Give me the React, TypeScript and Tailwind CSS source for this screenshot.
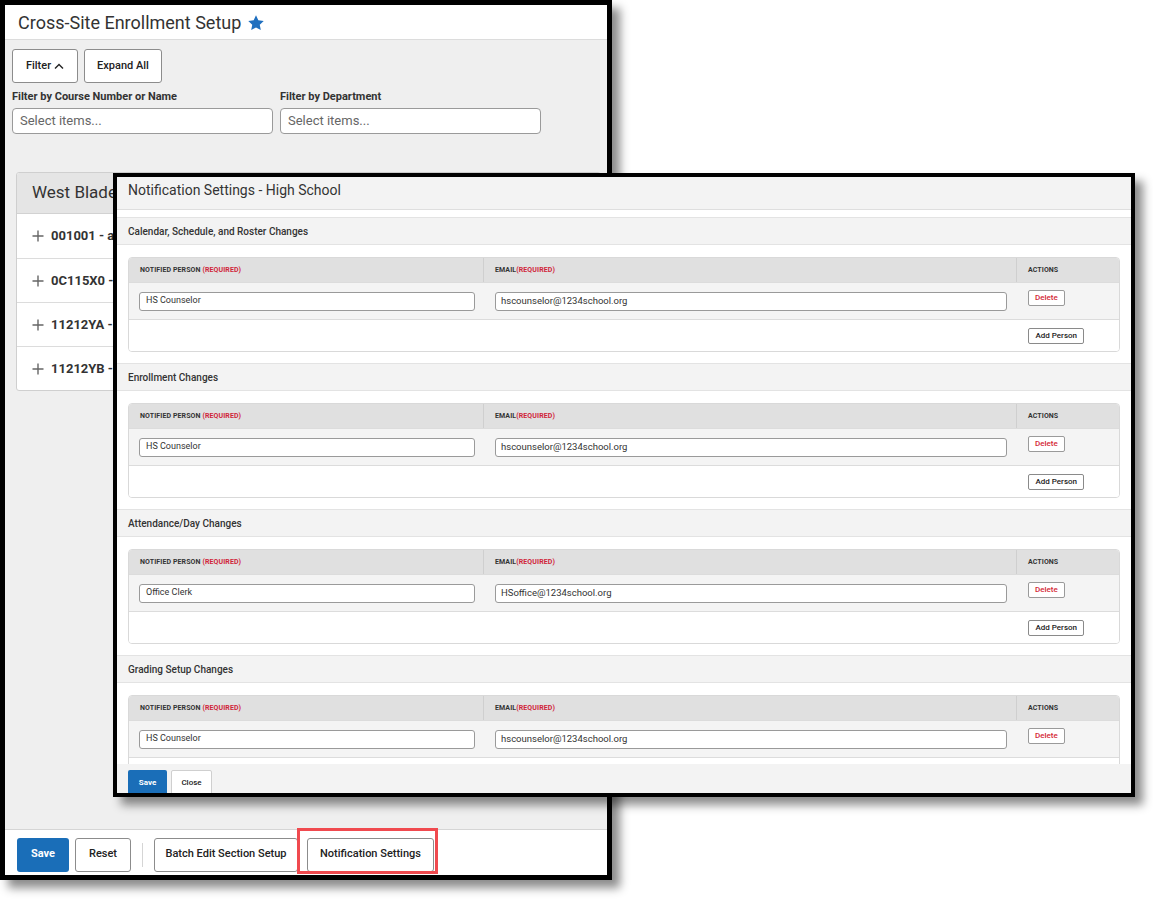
import React from 'react';

const font = { fontFamily: 'Roboto, "Liberation Sans", sans-serif' };

type Person = { name: string; email: string };

const SECTIONS: { title: string; people: Person[] }[] = [
    { title: 'Calendar, Schedule, and Roster Changes', people: [{ name: 'HS Counselor', email: 'hscounselor@1234school.org' }] },
    { title: 'Enrollment Changes', people: [{ name: 'HS Counselor', email: 'hscounselor@1234school.org' }] },
    { title: 'Attendance/Day Changes', people: [{ name: 'Office Clerk', email: 'HSoffice@1234school.org' }] },
    { title: 'Grading Setup Changes', people: [{ name: 'HS Counselor', email: 'hscounselor@1234school.org' }] },
];

const COURSES = ['001001 - aaa Test Course', '0C115X0 - Computer Science', '11212YA - Geometry A', '11212YB - Geometry B'];

function Star() {
    return (
        <svg width="18" height="18" viewBox="0 0 24 24" className="ml-[6px] mt-[1px]">
            <path d="M12 1.8l3.1 6.6 7.2.9-5.3 5 1.4 7.1L12 17.9l-6.4 3.5 1.4-7.1-5.3-5 7.2-.9z" fill="#1f6fbf" />
        </svg>
    );
}

function Plus() {
    return (
        <svg width="12" height="12" viewBox="0 0 12 12" className="shrink-0">
            <path d="M6 0.5v11M0.5 6h11" stroke="#666" strokeWidth="1.4" />
        </svg>
    );
}

function SectionBlock({ title, people }: { title: string; people: Person[] }) {
    return (
        <div>
            <div className="h-[28px] bg-[#f3f3f3] border-y border-[#e3e3e3] flex items-center px-[11px] text-[10px] font-medium text-[#333]">
                {title}
            </div>
            <div className="pt-[12px] pb-[11px] px-[11px] bg-white">
                <div className="border border-[#d9d9d9] rounded-[4px] overflow-hidden">
                    <div className="h-[24px] bg-[#e0e0e0] flex text-[7px] font-bold text-[#333] uppercase tracking-[0.1px]">
                        <div className="w-[355px] flex items-center px-[11px] border-r border-[#cfcfcf]">
                            Notified Person&nbsp;<span className="text-[#d0253a]">(Required)</span>
                        </div>
                        <div className="w-[533px] flex items-center px-[11px] border-r border-[#cfcfcf]">
                            Email<span className="text-[#d0253a]">(Required)</span>
                        </div>
                        <div className="flex-1 flex items-center px-[11px]">Actions</div>
                    </div>
                    {people.map((p, i) => (
                        <div key={i} className="h-[37px] bg-[#f4f4f4] border-t border-[#dcdcdc] flex items-center">
                            <div className="w-[355px] pl-[10px] pr-[9px]">
                                <div className="h-[19px] bg-white border border-[#9a9a9a] rounded-[3px] flex items-center px-[6px] text-[9px] text-[#333]">{p.name}</div>
                            </div>
                            <div className="w-[533px] pl-[11px] pr-[10px]">
                                <div className="h-[19px] bg-white border border-[#9a9a9a] rounded-[3px] flex items-center px-[5px] text-[9.5px] text-[#333]">{p.email}</div>
                            </div>
                            <div className="flex-1 flex pl-[11px] self-start pt-[7px]">
                                <button className="h-[16px] px-[6px] bg-white border border-[#9a9a9a] rounded-[2px] text-[8px] font-medium text-[#d41f35]">Delete</button>
                            </div>
                        </div>
                    ))}
                    <div className="h-[32px] bg-white border-t border-[#dcdcdc] flex items-center justify-end pr-[35px]">
                        <button className="h-[16px] px-[6px] bg-white border border-[#8a8a8a] rounded-[2px] text-[8px] font-medium text-[#222]">Add Person</button>
                    </div>
                </div>
            </div>
        </div>
    );
}

function BackWindow() {
    return (
        <div className="absolute left-0 top-0 w-[612px] h-[880px] border-[5px] border-black bg-[#efefef] flex flex-col shadow-[8px_8px_9px_rgba(0,0,0,0.45)]">
            <div className="h-[35px] bg-white border-b border-[#dcdcdc] flex items-center pl-[13px]">
                <span className="text-[18px] text-[#333]">Cross-Site Enrollment Setup</span>
                <Star />
            </div>
            <div className="flex-1 px-[7px] pt-[9px] overflow-hidden">
                <div className="flex gap-[6px]">
                    <button className="h-[34px] w-[66px] bg-white border border-[#8c8c8c] rounded-[3px] flex items-center justify-center gap-[3px] text-[11px] font-medium text-[#222]">
                        Filter
                        <svg width="10" height="8" viewBox="0 0 10 8"><path d="M1 6.5L5 2.5l4 4" stroke="#222" strokeWidth="1.4" fill="none" /></svg>
                    </button>
                    <button className="h-[34px] w-[78px] bg-white border border-[#8c8c8c] rounded-[3px] text-[11px] font-medium text-[#222]">Expand All</button>
                </div>
                <div className="flex gap-[7px] mt-[7px]">
                    {['Filter by Course Number or Name', 'Filter by Department'].map((l) => (
                        <div key={l} className="w-[261px]">
                            <div className="text-[11px] font-bold text-[#333] leading-[14px] mb-[4px]">{l}</div>
                            <div className="h-[26px] bg-white border border-[#9a9a9a] rounded-[4px] flex items-center px-[7px] text-[13px] text-[#666]">Select items...</div>
                        </div>
                    ))}
                </div>
                <div className="mt-[38px] ml-[4px] w-[585px] border border-[#cfcfcf] rounded-[3px] bg-white overflow-hidden">
                    <div className="h-[41px] bg-[#e5e5e5] border-b border-[#d2d2d2] flex items-center px-[15px] text-[17px] text-[#333]">West Bladen High School</div>
                    {COURSES.map((c, i) => (
                        <div key={c} className={`h-[44px] flex items-center gap-[7px] px-[15px] ${i > 0 ? 'border-t border-[#dcdcdc]' : ''}`}>
                            <Plus />
                            <span className="text-[13px] font-bold text-[#333] truncate">{c}</span>
                        </div>
                    ))}
                </div>
            </div>
            <div className="h-[46px] bg-white border-t border-[#d5d5d5] flex items-center pl-[12px] gap-[6px] relative">
                <button className="h-[34px] w-[52px] mt-[4px] bg-[#1a6eb8] rounded-[3px] text-[11px] font-bold text-white">Save</button>
                <button className="h-[34px] w-[56px] mt-[4px] bg-white border border-[#8c8c8c] rounded-[3px] text-[11px] font-medium text-[#222]">Reset</button>
                <div className="w-px h-[24px] bg-[#d5d5d5] mx-[5px] mt-[4px]" />
                <button className="h-[34px] w-[144px] mt-[4px] bg-white border border-[#8c8c8c] rounded-[3px] text-[11px] font-medium text-[#222]">Batch Edit Section Setup</button>
                <button className="h-[34px] w-[127px] mt-[4px] ml-[3px] bg-white border border-[#8c8c8c] rounded-[3px] text-[11px] font-medium text-[#222]">Notification Settings</button>
                <div className="absolute left-[292px] top-[-2px] w-[141px] h-[46px] border-[3px] border-[#f04a4f] pointer-events-none" />
            </div>
        </div>
    );
}

function Modal() {
    return (
        <div className="absolute left-[113px] top-[173px] w-[1022px] h-[624px] border-4 border-black bg-white flex flex-col overflow-hidden shadow-[8px_8px_9px_rgba(0,0,0,0.45)]">
            <div className="h-[33px] shrink-0 bg-[#f3f3f3] border-b border-[#dedede] flex items-center pb-[6px] px-[11px] text-[14px] text-[#333]">
                Notification Settings - High School
            </div>
            <div className="flex-1 overflow-hidden pt-[7px]">
                {SECTIONS.map((s) => (
                    <SectionBlock key={s.title} title={s.title} people={s.people} />
                ))}
            </div>
            <div className="h-[29px] shrink-0 bg-[#f3f3f3] flex items-start pt-[6px] px-[11px] gap-[4px]">
                <button className="h-[26px] w-[39px] bg-[#1a6eb8] rounded-t-[2px] text-[8px] font-bold text-white">Save</button>
                <button className="h-[26px] w-[41px] bg-white border border-[#cfcfcf] rounded-t-[2px] text-[8px] font-medium text-[#222]">Close</button>
            </div>
        </div>
    );
}

export default function App() {
    return (
        <div className="relative w-[1153px] h-[905px] bg-white overflow-hidden" style={font}>
            <BackWindow />
            <Modal />
        </div>
    );
}
